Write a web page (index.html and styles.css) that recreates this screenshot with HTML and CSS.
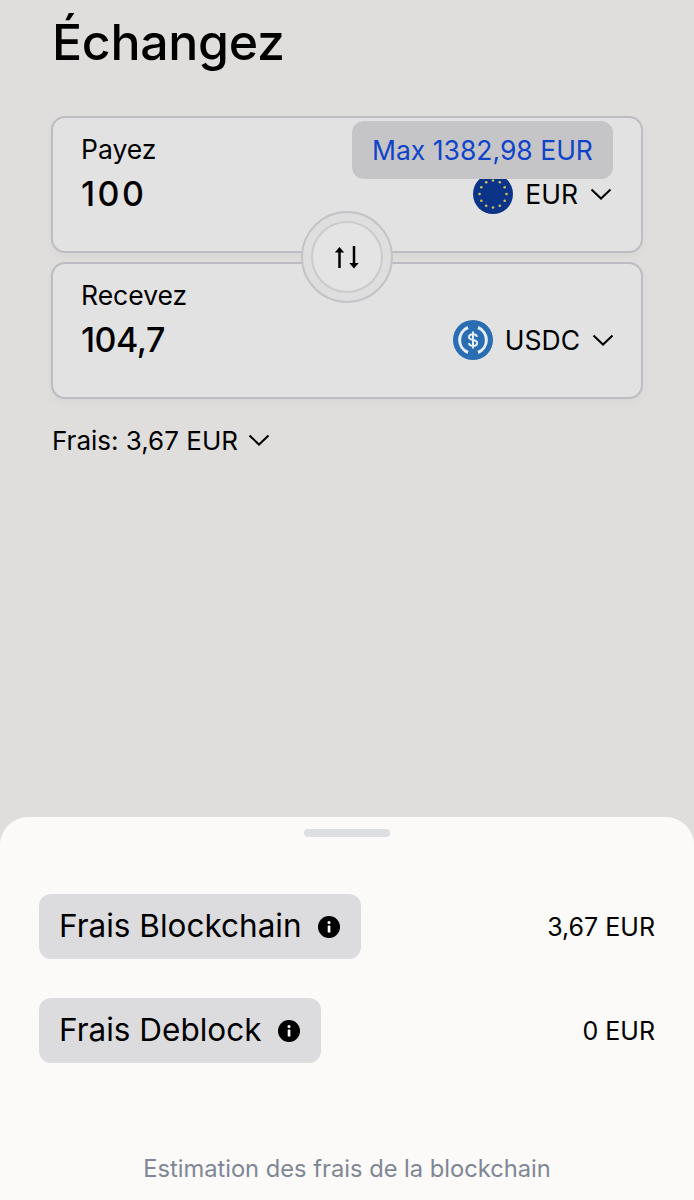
FILE: index.html
```html
<!DOCTYPE html>
<html lang="fr">
<head>
<meta charset="utf-8">
<title>Échangez</title>
<link rel="stylesheet" href="styles.css">
</head>
<body>
<main class="page">
  <section class="content">
    <h1 class="title">Échangez</h1>
    <div class="cards">
      <div class="card">
        <div class="label">Payez</div>
        <div class="row">
          <span class="amount amount-wide">100</span>
          <span class="currency">
            <svg class="coin" viewBox="0 0 40 40" aria-hidden="true">
              <circle cx="20" cy="20" r="20" fill="#0b3489"/>
              <g fill="#c9c25a">
                <circle cx="20" cy="6.500" r="1.300"/><circle cx="26.800" cy="8.300" r="1.300"/><circle cx="31.700" cy="13.200" r="1.300"/><circle cx="33.500" cy="20" r="1.300"/><circle cx="31.700" cy="26.800" r="1.300"/><circle cx="26.800" cy="31.700" r="1.300"/><circle cx="20" cy="33.500" r="1.300"/><circle cx="13.200" cy="31.700" r="1.300"/><circle cx="8.300" cy="26.800" r="1.300"/><circle cx="6.500" cy="20" r="1.300"/><circle cx="8.300" cy="13.200" r="1.300"/><circle cx="13.200" cy="8.300" r="1.300"/>
              </g>
            </svg>
            <span class="code">EUR</span>
            <svg class="chev" viewBox="0 0 22 12" aria-hidden="true"><path d="M1.500 1.500 11 10.500l9.500-9"/></svg>
          </span>
        </div>
        <div class="max">Max 1382,98 EUR</div>
      </div>
      <div class="card">
        <div class="label">Recevez</div>
        <div class="row">
          <span class="amount">104,7</span>
          <span class="currency shifted">
            <svg class="coin" viewBox="0 0 40 40" aria-hidden="true">
              <circle cx="20" cy="20" r="20" fill="#2a6db2"/>
              <path class="usdc-ring" d="M15 7.500a13.500 13.500 0 0 0 0 25M25 7.500a13.500 13.500 0 0 1 0 25"/>
              <path class="usdc-s" d="M24 16.800c-.3-1.700-1.800-2.600-4-2.600-2.400 0-4 1.200-4 2.900 0 1.900 1.500 2.500 4 2.900 2.600.4 4.100 1.100 4.100 3 0 1.800-1.700 2.900-4.100 2.900-2.300 0-3.800-1-4.100-2.700M20 11.500v17"/>
            </svg>
            <span class="code">USDC</span>
            <svg class="chev" viewBox="0 0 22 12" aria-hidden="true"><path d="M1.500 1.500 11 10.500l9.500-9"/></svg>
          </span>
        </div>
      </div>
      <button class="swap" type="button" aria-label="Inverser">
        <span class="swap-inner">
          <svg viewBox="0 0 26 26" aria-hidden="true">
            <path class="swap-line" d="M5.500 7v17M20 2v18"/>
            <path class="swap-head" d="M.8 8.500 5.500 3l4.700 5.500zM15.300 19h9.400L20 24.500z"/>
          </svg>
        </span>
      </button>
    </div>
    <div class="fees">
      <span>Frais: 3,67 EUR</span>
      <svg class="chev" viewBox="0 0 22 12" aria-hidden="true"><path d="M1.500 1.500 11 10.500l9.500-9"/></svg>
    </div>
  </section>
  <section class="sheet">
    <div class="handle"></div>
    <div class="fee-row">
      <div class="pill"><span>Frais Blockchain</span>
        <svg class="info" viewBox="0 0 22 22" aria-hidden="true"><circle cx="11" cy="11" r="11"/><rect class="info-mark" x="9.700" y="9.500" width="2.700" height="7" rx=".5"/><circle class="info-mark" cx="11" cy="6.500" r="1.500"/></svg>
      </div>
      <span class="value">3,67 EUR</span>
    </div>
    <div class="fee-row">
      <div class="pill"><span>Frais Deblock</span>
        <svg class="info" viewBox="0 0 22 22" aria-hidden="true"><circle cx="11" cy="11" r="11"/><rect class="info-mark" x="9.700" y="9.500" width="2.700" height="7" rx=".5"/><circle class="info-mark" cx="11" cy="6.500" r="1.500"/></svg>
      </div>
      <span class="value">0 EUR</span>
    </div>
    <p class="note">Estimation des frais de la blockchain</p>
  </section>
</main>
</body>
</html>
```
FILE: styles.css
```css
* { box-sizing: border-box; }
html, body { margin: 0; padding: 0; }
body {
  background: #dfdedc;
  font-family: Inter, "Liberation Sans", sans-serif;
  font-weight: 400;
  color: #000;
}
.page {
  height: 1200px;
  display: flex;
  flex-direction: column;
  justify-content: space-between;
  overflow: hidden;
}
.content { padding: 0 51px; }
.title {
  margin: 0;
  height: 116px;
  padding: 12px 0 0 1px;
  font-size: 50px;
  line-height: 60px;
  font-weight: 450;
  letter-spacing: -0.3px;
}
.cards {
  position: relative;
  display: flex;
  flex-direction: column;
  gap: 9px;
}
.card {
  position: relative;
  height: 137px;
  padding: 17px 29px 0 28px;
  background: #e2e2e3;
  border: 2px solid #bcbcc2;
  border-radius: 14px;
  box-shadow: 0 4px 10px rgba(0, 0, 0, 0.03);
}
.label {
  font-size: 26.500px;
  line-height: 28px;
}
.row {
  display: flex;
  align-items: center;
  justify-content: space-between;
  margin-top: 11px;
  height: 40px;
}
.amount {
  font-size: 34px;
  line-height: 40px;
  font-weight: 450;
  letter-spacing: -0.5px;
}
.amount-wide { letter-spacing: 2.500px; }
.currency {
  display: flex;
  align-items: center;
}
.currency.shifted { margin-right: -2px; }
.coin {
  width: 40px;
  height: 40px;
  margin-right: 12px;
}
.code {
  font-size: 26.500px;
  margin-right: 12px;
}
.chev {
  width: 22px;
  height: 12px;
  fill: none;
  stroke: #000;
  stroke-width: 2;
}
.usdc-ring, .usdc-s {
  fill: none;
  stroke: #e6eef7;
  stroke-width: 3;
}
.usdc-s { stroke-width: 2; }
.max {
  position: absolute;
  top: 3px;
  right: 28px;
  width: 261px;
  height: 58px;
  display: flex;
  align-items: center;
  justify-content: center;
  background: #c5c5c8;
  border-radius: 12px;
  color: #0f44c9;
  font-size: 26.500px;
}
.swap {
  position: absolute;
  left: 250px;
  top: 95px;
  width: 92px;
  height: 92px;
  padding: 0;
  display: flex;
  align-items: center;
  justify-content: center;
  background: #dededf;
  border: 2px solid #c4c4c8;
  border-radius: 50%;
}
.swap-inner {
  width: 72px;
  height: 72px;
  display: flex;
  align-items: center;
  justify-content: center;
  background: #e4e4e5;
  border: 2px solid #cbcbce;
  border-radius: 50%;
}
.swap svg {
  width: 26px;
  height: 26px;
}
.swap-line {
  fill: none;
  stroke: #000;
  stroke-width: 2.500;
}
.swap-head { fill: #000; }
.fees {
  display: flex;
  align-items: center;
  gap: 10px;
  margin: 24px 0 0 1px;
  height: 34px;
  font-size: 26px;
}
.sheet {
  height: 383px;
  padding: 12px 39px 0;
  background: #fbfaf9;
  border-radius: 28px 28px 0 0;
  display: flex;
  flex-direction: column;
}
.handle {
  width: 86px;
  height: 8px;
  margin: 0 auto 57px;
  background: #dcdee2;
  border-radius: 4px;
}
.fee-row {
  display: flex;
  align-items: center;
  justify-content: space-between;
  height: 65px;
  margin-bottom: 39px;
}
.pill {
  display: flex;
  align-items: center;
  gap: 16px;
  height: 65px;
  padding: 0 21px 0 20px;
  background: #dcdcde;
  border-radius: 12px;
  font-size: 31.500px;
}
.pill span { margin-top: -3px; }
.info {
  width: 22px;
  height: 22px;
  fill: #000;
}
.info .info-mark { fill: #fff; }
.value { font-size: 25px; }
.note {
  margin: 52px 0 0;
  text-align: center;
  color: #7f8795;
  font-size: 23.700px;
  line-height: 30px;
}
```
